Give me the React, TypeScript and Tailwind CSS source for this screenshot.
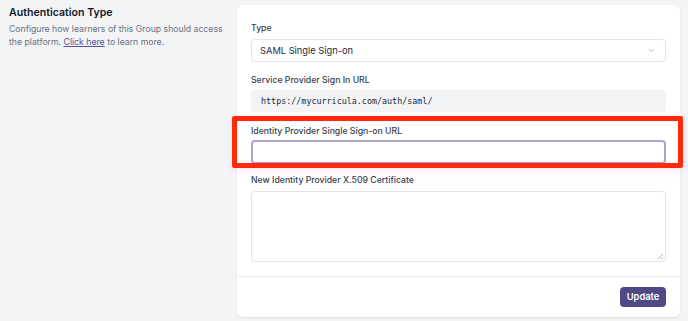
import { ChevronDown } from 'lucide-react';

function Label({ children }: { children: React.ReactNode }) {
  return <div className="h-[12px] text-[8.7px] leading-[12px] font-medium text-[#374151]">{children}</div>;
}

export default function App() {
  return (
    <div className="w-[688px] h-[321px] bg-[#f3f4f6] flex font-['Inter',sans-serif] relative overflow-hidden">
      {/* Left description */}
      <div className="w-[237px] pl-[9px] pt-[5px] pr-[4px]">
        <h2 className="text-[10.6px] leading-[15px] font-semibold text-[#111827]">Authentication Type</h2>
        <p className="mt-[3px] text-[8.7px] leading-[13px] text-[#6b7280]">
          Configure how learners of this Group should access the platform.{' '}
          <a className="text-[#55519a] underline">Click here</a> to learn more.
        </p>
      </div>

      {/* Form card */}
      <div className="mt-[5px] w-[443px] h-[312px] bg-white rounded-md shadow-[0_1px_2px_rgba(0,0,0,0.08)] flex flex-col">
        <div className="px-[14px] pt-[17px] pb-[14px] border-b border-[#eceef1]">
          <Label>Type</Label>
          <div className="mt-[5px] h-[23px] rounded border border-[#e2e4e8] flex items-center justify-between pl-[8px] pr-[9px]">
            <span className="text-[9.3px] text-[#1f2937]">SAML Single Sign-on</span>
            <ChevronDown className="w-[9px] h-[9px] text-[#9ca3af]" strokeWidth={2} />
          </div>

          <div className="mt-[12px]">
            <Label>Service Provider Sign In URL</Label>
          </div>
          <div className="mt-[4px] h-[22px] rounded bg-[#f3f4f6] flex items-center pl-[10px] font-['DejaVu_Sans_Mono',monospace] text-[8.4px] text-[#1f2937]">
            https://mycurricula.com/auth/saml/
          </div>

          <div className="mt-[13px]">
            <Label>Identity Provider Single Sign-on URL</Label>
          </div>
          <div className="mt-[3px] h-[24px] rounded border-2 border-[#a9a6cc] bg-white" />

          <div className="mt-[10px]">
            <Label>New Identity Provider X.509 Certificate</Label>
          </div>
          <div className="mt-[5px] h-[71px] rounded border border-[#e2e4e8] relative">
            <svg className="absolute right-[1px] bottom-[1px]" width="7" height="7" viewBox="0 0 7 7">
              <path d="M6 1 L1 6 M6 4 L4 6" stroke="#9ca3af" strokeWidth="0.8" />
            </svg>
          </div>
        </div>
        <div className="flex justify-end px-[14px] pt-[10px]">
          <button className="h-[20px] w-[46px] rounded bg-[#4f4986] text-white text-[9.3px] font-semibold">Update</button>
        </div>
      </div>

      {/* Annotation highlight */}
      <div className="absolute left-[232px] top-[116px] w-[451px] h-[52px] border-[5px] border-[#ff2a0c] rounded-[2px] shadow-[0_3px_6px_rgba(255,120,200,0.15)]" />
    </div>
  );
}
